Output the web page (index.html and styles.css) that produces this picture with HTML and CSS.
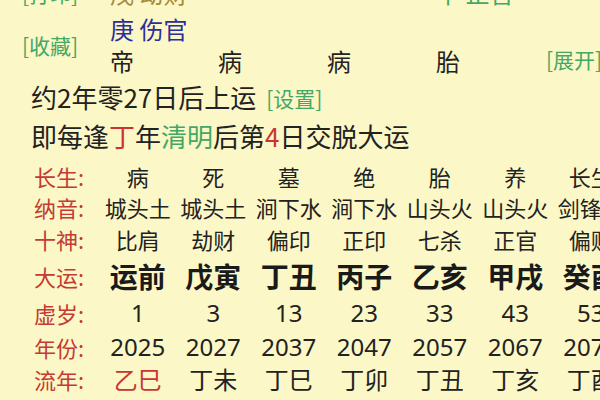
FILE: index.html
```html
<!DOCTYPE html>
<html lang="zh-CN">
<head>
<meta charset="utf-8">
<link rel="stylesheet" href="styles.css">
</head>
<body>
<div class="page">
  <div class="top">
    <span class="link r0 c0">[打印]</span>
    <span class="olive r0 c1">戊 劫财</span>
    <span class="green r0 c4">甲 正官</span>
    <span class="blue r1 c1">庚 伤官</span>
    <span class="link fav">[收藏]</span>
    <span class="r2 c1">帝</span>
    <span class="r2 c2">病</span>
    <span class="r2 c3">病</span>
    <span class="r2 c4">胎</span>
    <span class="link r2 expand">[展开]</span>
  </div>
  <div class="line">约2年零27日后上运 <span class="link small">[设置]</span></div>
  <div class="line">即每逢<span class="red">丁</span>年<span class="green">清明</span>后第<span class="red">4</span>日交脱大运</div>
  <div class="table">
    <div class="lbl">长生:</div>
    <div class="cell">病</div><div class="cell">死</div><div class="cell">墓</div><div class="cell">绝</div><div class="cell">胎</div><div class="cell">养</div><div class="cell">长生</div>

    <div class="lbl">纳音:</div>
    <div class="cell">城头土</div><div class="cell">城头土</div><div class="cell">涧下水</div><div class="cell">涧下水</div><div class="cell">山头火</div><div class="cell">山头火</div><div class="cell">剑锋金</div>

    <div class="lbl">十神:</div>
    <div class="cell">比肩</div><div class="cell">劫财</div><div class="cell">偏印</div><div class="cell">正印</div><div class="cell">七杀</div><div class="cell">正官</div><div class="cell">偏财</div>

    <div class="lbl">大运:</div>
    <div class="cell big">运前</div><div class="cell big">戊寅</div><div class="cell big">丁丑</div><div class="cell big">丙子</div><div class="cell big">乙亥</div><div class="cell big">甲戌</div><div class="cell big">癸酉</div>

    <div class="lbl">虚岁:</div>
    <div class="cell num">1</div><div class="cell num">3</div><div class="cell num">13</div><div class="cell num">23</div><div class="cell num">33</div><div class="cell num">43</div><div class="cell num">53</div>

    <div class="lbl">年份:</div>
    <div class="cell num">2025</div><div class="cell num">2027</div><div class="cell num">2037</div><div class="cell num">2047</div><div class="cell num">2057</div><div class="cell num">2067</div><div class="cell num">2077</div>

    <div class="lbl">流年:</div>
    <div class="cell ln red">乙巳</div><div class="cell ln">丁未</div><div class="cell ln">丁巳</div><div class="cell ln">丁卯</div><div class="cell ln">丁丑</div><div class="cell ln">丁亥</div><div class="cell ln">丁酉</div>
  </div>
</div>
</body>
</html>
```
FILE: styles.css
```css
html, body {
  margin: 0;
  padding: 0;
}
body {
  width: 600px;
  height: 400px;
  overflow: hidden;
  background: #fcf7c6;
  font-family: "Noto Sans CJK SC", "Noto Sans", sans-serif;
  color: #222;
}
.page {
  width: 600px;
  overflow: hidden;
}
.top {
  display: grid;
  grid-template-columns: 110px 108px 109px 109px 110px 1fr;
  grid-template-rows: 34px 34px 34px;
  margin-top: -24px;
  font-size: 24px;
  align-items: center;
}
.top > span { white-space: nowrap; line-height: 1; }
.r0 { grid-row: 1; }
.r1 { grid-row: 2; margin-top: 3px; }
.r2 { grid-row: 3; }
.c0 { grid-column: 1; padding-left: 22px; }
.c1 { grid-column: 2; }
.c2 { grid-column: 3; }
.c3 { grid-column: 4; }
.c4 { grid-column: 5; }
.fav { grid-column: 1; grid-row: 2 / span 2; padding-left: 22px; margin-top: 2px; }
.expand { grid-column: 6; justify-self: end; padding-right: 10px; margin-top: -4px; }
.link { color: #43a866; font-size: 21px; }
.olive { color: #a68a3c; }
.green { color: #43a866; }
.blue { color: #2b2f9c; }
.red { color: #cc3333; }
.line {
  font-size: 26px;
  line-height: 37px;
  padding-left: 31px;
  white-space: nowrap;
}
.top + .line { margin-top: 0; }
.small { font-size: 21px; margin-left: 4px; vertical-align: 1px; }
.table {
  display: grid;
  grid-template-columns: 100px repeat(7, 75.5px);
  grid-template-rows: 30px 31px 33px 41px 34px 33px 32px;
  margin-top: 7px;
  align-items: center;
  white-space: nowrap;
}
.lbl {
  color: #c43a35;
  font-size: 22px;
  padding-left: 34px;
  line-height: 1;
}
.cell {
  text-align: center;
  font-size: 22px;
  line-height: 1;
}
.big { font-size: 28px; font-weight: bold; color: #1a1a1a; }
.num { font-size: 24px; font-family: "Noto Sans", "Noto Sans CJK SC", sans-serif; }
.ln { font-size: 24px; }
.ln.red { color: #cc3333; }
```
